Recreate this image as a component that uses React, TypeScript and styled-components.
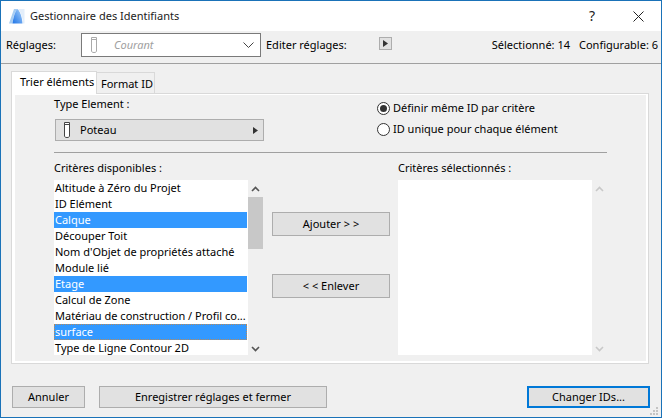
import React, { FC } from "react";
import styled, { createGlobalStyle } from "styled-components";

const GlobalStyle = createGlobalStyle`
  html, body {
    margin: 0;
    padding: 0;
    background: #f0f0f0;
  }
  body {
    font-family: "Noto Sans", "Open Sans", sans-serif;
    font-size: 11px;
    line-height: 16px;
    color: #000;
  }
`;

const Window = styled.div`
  position: relative;
  display: flex;
  flex-direction: column;
  box-sizing: border-box;
  width: 662px;
  height: 418px;
  border: 1px solid #1a72b8;
  background: #f0f0f0;
  overflow: hidden;
`;

const TitleBar = styled.div`
  display: flex;
  align-items: center;
  height: 30px;
  padding: 0 0 0 8px;
  background: #fff;
`;

const TitleText = styled.span`
  margin-left: 5px;
  flex: 1;
  color: #222;
`;

const TitleButton = styled.div<{ $width: number }>`
  display: flex;
  align-items: center;
  justify-content: center;
  width: ${(p) => p.$width}px;
  height: 30px;
  color: #222;
  font-size: 14px;
`;

const SettingsRow = styled.div`
  display: flex;
  align-items: center;
  box-sizing: border-box;
  height: 33px;
  padding: 0 3px 5px 5px;
  border-bottom: 1px solid #a0a0a0;
`;

const SettingsLabel = styled.span`
  width: 75px;
`;

const PresetSelect = styled.div`
  display: flex;
  align-items: center;
  box-sizing: border-box;
  width: 180px;
  height: 24px;
  padding: 0 6px 0 8px;
  border: 1px solid #7a7a7a;
  background: #fff;
`;

const PresetName = styled.span`
  flex: 1;
  margin-left: 16px;
  color: #a0a0a0;
  font-style: italic;
`;

const EditLabel = styled.span`
  margin-left: 5px;
  width: 113px;
`;

const SmallArrowButton = styled.div`
  display: flex;
  align-items: center;
  justify-content: center;
  box-sizing: border-box;
  width: 13px;
  height: 13px;
  margin-top: -3px;
  border: 1px solid #adadad;
  background: #e1e1e1;
`;

const Counters = styled.div`
  display: flex;
  gap: 9px;
  margin-left: auto;
`;

const TabStrip = styled.div`
  display: flex;
  align-items: flex-end;
  height: 22px;
  margin: 7px 0 0 10px;
`;

const Tab = styled.div<{ $active?: boolean }>`
  box-sizing: border-box;
  position: relative;
  width: ${(p) => (p.$active ? 86 : 58)}px;
  padding-left: ${(p) => (p.$active ? 8 : 4)}px;
  height: ${(p) => (p.$active ? 23 : 21)}px;
  margin-bottom: ${(p) => (p.$active ? -1 : 0)}px;
  border: 1px solid #d9d9d9;
  border-left-width: ${(p) => (p.$active ? 1 : 0)}px;
  border-bottom-width: 0;
  background: ${(p) => (p.$active ? "#fff" : "#f0f0f0")};
  line-height: ${(p) => (p.$active ? 20 : 21)}px;
  z-index: ${(p) => (p.$active ? 1 : 0)};
`;

const TabPanel = styled.div`
  box-sizing: border-box;
  display: flex;
  flex-direction: column;
  width: 638px;
  height: 271px;
  margin-left: 10px;
  padding: 2px 41px 0 42px;
  border: 1px solid #d9d9d9;
  box-shadow: inset 3px 1px 0 #fff, inset -2px -2px 0 #fff;
`;

const TopBlock = styled.div`
  display: flex;
  justify-content: space-between;
  height: 56px;
  border-bottom: 1px solid #a0a0a0;
`;

const ElementColumn = styled.div`
  display: flex;
  flex-direction: column;
  gap: 7px;
`;

const ElementButton = styled.div`
  display: flex;
  align-items: center;
  box-sizing: border-box;
  width: 209px;
  height: 22px;
  margin-left: 1px;
  padding: 0 5px 0 7px;
  border: 1px solid #adadad;
  background: #e1e1e1;
`;

const ElementName = styled.span`
  flex: 1;
  margin-left: 9px;
`;

const RadioColumn = styled.div`
  display: flex;
  flex-direction: column;
  gap: 5px;
  width: 230px;
  margin-top: 4px;
`;

const RadioRow = styled.label`
  display: flex;
  align-items: center;
  gap: 3px;
`;

const RadioDot = styled.span<{ $checked?: boolean }>`
  display: flex;
  align-items: center;
  justify-content: center;
  box-sizing: border-box;
  width: 13px;
  height: 13px;
  border: 1px solid #333;
  border-radius: 50%;
  background: #fff;

  &::after {
    content: "";
    display: ${(p) => (p.$checked ? "block" : "none")};
    width: 7px;
    height: 7px;
    border-radius: 50%;
    background: #333;
  }
`;

const ListsRow = styled.div`
  display: grid;
  grid-template-columns: 210px 118px 209px;
  column-gap: 8px;
  margin-top: 7px;
`;

const ListColumn = styled.div`
  display: flex;
  flex-direction: column;
  gap: 4px;
`;

const ListFrame = styled.div`
  display: flex;
  height: 175px;
`;

const ListBox = styled.div`
  box-sizing: border-box;
  width: 194px;
  height: 175px;
  background: #fff;
  overflow: hidden;
`;

const ListItem = styled.div<{ $selected?: boolean; $focused?: boolean }>`
  box-sizing: border-box;
  width: 193px;
  height: 16px;
  padding-left: 1px;
  white-space: nowrap;
  color: ${(p) => (p.$selected ? "#fff" : "#000")};
  background: ${(p) => (p.$selected ? "#3399ff" : "transparent")};
  outline: ${(p) => (p.$focused ? "1px dotted #b88a5a" : "none")};
  outline-offset: -1px;
`;

const ScrollTrack = styled.div`
  display: flex;
  flex-direction: column;
  align-items: center;
  justify-content: space-between;
  position: relative;
  width: 15px;
  height: 175px;
  padding: 6px 0 3px;
  box-sizing: border-box;
`;

const ScrollThumb = styled.div`
  position: absolute;
  top: 17px;
  left: 0;
  width: 15px;
  height: 52px;
  background: #c8c8c8;
`;

const MoveButtons = styled.div`
  display: flex;
  flex-direction: column;
  gap: 38px;
  padding-top: 52px;
`;

const PushButton = styled.div<{ $width?: number; $height?: number; $default?: boolean }>`
  display: flex;
  align-items: center;
  justify-content: center;
  box-sizing: border-box;
  width: ${(p) => (p.$width ? `${p.$width}px` : "100%")};
  height: ${(p) => p.$height ?? 22}px;
  border: ${(p) => (p.$default ? "2px solid #0078d7" : "1px solid #adadad")};
  background: #e1e1e1;
`;

const Footer = styled.div`
  display: flex;
  margin: auto 0 9px;
  padding: 0 11px;
  gap: 14px;
`;

const FooterEnd = styled.div`
  margin-left: auto;
`;

const ResizeGrip = styled.svg`
  position: absolute;
  right: 3px;
  bottom: 2px;
`;

const availableCriteria: { label: string; selected?: boolean; focused?: boolean }[] = [
  { label: "Altitude à Zéro du Projet" },
  { label: "ID Elément" },
  { label: "Calque", selected: true },
  { label: "Découper Toit" },
  { label: "Nom d'Objet de propriétés attaché" },
  { label: "Module lié" },
  { label: "Etage", selected: true },
  { label: "Calcul de Zone" },
  { label: "Matériau de construction / Profil co..." },
  { label: "surface", selected: true, focused: true },
  { label: "Type de Ligne Contour 2D" },
];

const ColumnIcon: FC<{ color?: string }> = ({ color = "#444" }) => (
  <svg width="8" height="18" viewBox="0 0 8 18">
    <path d="M1.500 1.500h5v13.500c0 1-1 1.500-2.500 1.500s-2.500-.5-2.500-1.500z" fill="#fff" stroke={color} />
    <path d="M1.500 3.500h5" stroke={color} fill="none" />
  </svg>
);

const Triangle: FC = () => (
  <svg width="5" height="7" viewBox="0 0 5 7">
    <path d="M0 0l5 3.500L0 7z" fill="#333" />
  </svg>
);

const ScrollArrow: FC<{ down?: boolean; color: string }> = ({ down, color }) => (
  <svg width="9" height="6" viewBox="0 0 9 6">
    <path d={down ? "M1 1l3.500 3.500L8 1" : "M1 5l3.500-3.500L8 5"} fill="none" stroke={color} strokeWidth="1.600" />
  </svg>
);

const AppLogo: FC = () => (
  <svg width="16" height="16" viewBox="0 0 16 16">
    <defs>
      <linearGradient id="archFill" x1="0" y1="1" x2="1" y2="0">
        <stop offset="0" stopColor="#1f74e6" />
        <stop offset="1" stopColor="#a9d2fa" />
      </linearGradient>
    </defs>
    <path d="M0 15.500L5 1h3.500C5.500 4 4 9 3.500 15.500z" fill="#a6cdf3" />
    <path d="M3.500 15.500C4.500 8 6.500 2.500 8.500 1c2.500 2 4.500 8 5 14.500z" fill="url(#archFill)" />
    <path d="M9 1h6.500v14.500h-1.500C13.500 9 11.500 3.500 9 1z" fill="#e3eefa" />
  </svg>
);

const App: FC = () => (
  <>
    <GlobalStyle />
    <Window>
      <TitleBar>
        <AppLogo />
        <TitleText>Gestionnaire des Identifiants</TitleText>
        <TitleButton $width={46}>?</TitleButton>
        <TitleButton $width={46}>
          <svg width="11" height="11" viewBox="0 0 11 11">
            <path d="M.5.500l10 10M10.500.500l-10 10" stroke="#222" fill="none" />
          </svg>
        </TitleButton>
      </TitleBar>
      <SettingsRow>
        <SettingsLabel>Réglages:</SettingsLabel>
        <PresetSelect>
          <ColumnIcon color="#aaa" />
          <PresetName>Courant</PresetName>
          <svg width="11" height="6" viewBox="0 0 11 6">
            <path d="M.5.500l5 5 5-5" fill="none" stroke="#444" />
          </svg>
        </PresetSelect>
        <EditLabel>Editer réglages:</EditLabel>
        <SmallArrowButton>
          <Triangle />
        </SmallArrowButton>
        <Counters>
          <span>Sélectionné: 14</span>
          <span>Configurable: 6</span>
        </Counters>
      </SettingsRow>
      <TabStrip>
        <Tab $active>Trier éléments</Tab>
        <Tab>Format ID</Tab>
      </TabStrip>
      <TabPanel>
        <TopBlock>
          <ElementColumn>
            <span>Type Element :</span>
            <ElementButton>
              <ColumnIcon />
              <ElementName>Poteau</ElementName>
              <Triangle />
            </ElementButton>
          </ElementColumn>
          <RadioColumn>
            <RadioRow>
              <RadioDot $checked />
              Définir même ID par critère
            </RadioRow>
            <RadioRow>
              <RadioDot />
              ID unique pour chaque élément
            </RadioRow>
          </RadioColumn>
        </TopBlock>
        <ListsRow>
          <ListColumn>
            <span>Critères disponibles :</span>
            <ListFrame>
              <ListBox>
                {availableCriteria.map((item) => (
                  <ListItem key={item.label} $selected={item.selected} $focused={item.focused}>
                    {item.label}
                  </ListItem>
                ))}
              </ListBox>
              <ScrollTrack>
                <ScrollArrow color="#555" />
                <ScrollThumb />
                <ScrollArrow down color="#555" />
              </ScrollTrack>
            </ListFrame>
          </ListColumn>
          <MoveButtons>
            <PushButton $height={24}>Ajouter &gt; &gt;</PushButton>
            <PushButton $height={24}>&lt; &lt; Enlever</PushButton>
          </MoveButtons>
          <ListColumn>
            <span>Critères sélectionnés :</span>
            <ListFrame>
              <ListBox />
              <ScrollTrack>
                <ScrollArrow color="#c8c8c8" />
                <ScrollArrow down color="#c8c8c8" />
              </ScrollTrack>
            </ListFrame>
          </ListColumn>
        </ListsRow>
      </TabPanel>
      <Footer>
        <PushButton $width={73}>Annuler</PushButton>
        <PushButton $width={228}>Enregistrer réglages et fermer</PushButton>
        <FooterEnd>
          <PushButton $width={123} $default>
            Changer IDs...
          </PushButton>
        </FooterEnd>
      </Footer>
      <ResizeGrip width="8" height="8" viewBox="0 0 8 8">
        <path d="M6 0h2v2H6zM3 3h2v2H3zM6 3h2v2H6zM0 6h2v2H0zM3 6h2v2H3zM6 6h2v2H6z" fill="#c4c4c4" />
      </ResizeGrip>
    </Window>
  </>
);

export default App;
